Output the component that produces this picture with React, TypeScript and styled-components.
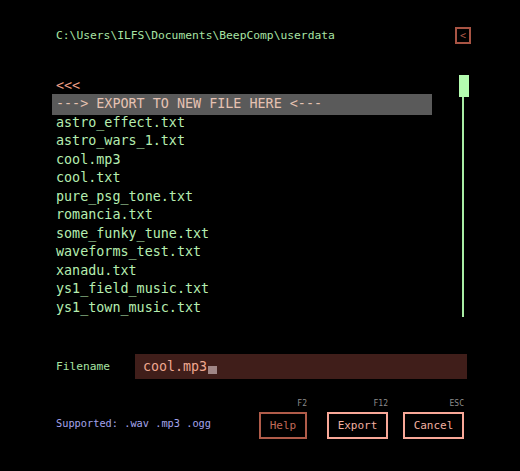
import React from 'react'
import styled, { createGlobalStyle } from 'styled-components'

const GlobalStyle = createGlobalStyle`
  html, body {
    margin: 0;
    padding: 0;
    background: #000;
  }
  body {
    font-family: 'DejaVu Sans Mono', 'Liberation Mono', monospace;
  }
`

const Screen = styled.div`
  width: 520px;
  height: 471px;
  box-sizing: border-box;
  padding: 27px 49px 0 52px;
  background: #000;
  display: flex;
  flex-direction: column;
`

const Header = styled.div`
  display: flex;
  align-items: center;
  justify-content: space-between;
  height: 17px;
`

const Path = styled.div`
  padding-left: 4px;
  margin-top: 1px;
  font-size: 11.3px;
  line-height: 14px;
  color: #a8e4a4;
  white-space: pre;
`

const BackButton = styled.div`
  width: 16px;
  height: 17px;
  box-sizing: border-box;
  border: 2px solid #a85444;
  color: #b05a48;
  font-size: 10px;
  line-height: 13px;
  text-align: center;
`

const Browser = styled.div`
  display: flex;
  gap: 27px;
  margin-top: 31px;
`

const List = styled.div`
  width: 380px;
  padding-top: 1.5px;
  display: flex;
  flex-direction: column;
`

const Row = styled.div<{ $kind?: 'up' | 'export' | 'file' }>`
  height: ${p => (p.$kind === 'export' ? '20.5px' : '18.5px')};
  margin: ${p => (p.$kind === 'export' ? '-1px 0' : '0')};
  padding-left: 4px;
  font-size: 13.4px;
  line-height: ${p => (p.$kind === 'export' ? '20.5px' : '18.5px')};
  white-space: pre;
  background: ${p => (p.$kind === 'export' ? '#5a5a5a' : 'transparent')};
  color: ${p =>
    p.$kind === 'up' ? '#f0a088' : p.$kind === 'export' ? '#e6c2b2' : '#b6eeb0'};
`

const Scrollbar = styled.div`
  width: 10px;
  display: flex;
  flex-direction: column;
`

const Thumb = styled.div`
  height: 22px;
  background: #b4fcb0;
`

const Track = styled.div`
  flex: 1;
  width: 2px;
  margin-left: 3px;
  background: #a8eca4;
`

const FilenameRow = styled.div`
  display: flex;
  align-items: center;
  margin-top: 37px;
  padding-left: 4px;
`

const Label = styled.div`
  width: 79px;
  font-size: 11.2px;
  color: #a8e4a4;
`

const Input = styled.div`
  width: 332px;
  height: 25px;
  box-sizing: border-box;
  padding-left: 8px;
  background: #401e1a;
  font-size: 13.3px;
  line-height: 25px;
  color: #f0a890;
`

const Cursor = styled.span`
  display: inline-block;
  width: 9px;
  height: 8px;
  margin-left: 1px;
  vertical-align: -3px;
  background: #a08686;
`

const Footer = styled.div`
  display: flex;
  align-items: flex-end;
  margin-top: 20px;
  padding: 0 7px 0 4px;
`

const Supported = styled.div`
  flex: 1;
  margin-bottom: 9px;
  font-size: 10.3px;
  line-height: 14px;
  color: #a4a4ec;
`

const Action = styled.div<{ $offset: number; $width: number }>`
  display: flex;
  flex-direction: column;
  align-items: flex-end;
  width: ${p => p.$width}px;
  margin-left: ${p => p.$offset}px;
`

const Key = styled.div`
  height: 10px;
  margin-bottom: 3px;
  font-size: 8px;
  line-height: 10px;
  color: #8c8c8c;
`

const Button = styled.div<{ $dim?: boolean }>`
  width: 100%;
  height: 27px;
  box-sizing: border-box;
  border: 2px solid ${p => (p.$dim ? '#b05c4a' : '#f8a898')};
  color: ${p => (p.$dim ? '#c06a58' : '#f2b0a0')};
  font-size: 11px;
  line-height: 24px;
  text-align: center;
`

const files = [
  'astro_effect.txt',
  'astro_wars_1.txt',
  'cool.mp3',
  'cool.txt',
  'pure_psg_tone.txt',
  'romancia.txt',
  'some_funky_tune.txt',
  'waveforms_test.txt',
  'xanadu.txt',
  'ys1_field_music.txt',
  'ys1_town_music.txt',
]

export default function App() {
  return (
    <>
      <GlobalStyle />
      <Screen>
        <Header>
          <Path>C:\Users\ILFS\Documents\BeepComp\userdata</Path>
          <BackButton>&lt;</BackButton>
        </Header>

        <Browser>
          <List>
            <Row $kind="up">&lt;&lt;&lt;</Row>
            <Row $kind="export">---&gt; EXPORT TO NEW FILE HERE &lt;---</Row>
            {files.map(f => (
              <Row key={f} $kind="file">
                {f}
              </Row>
            ))}
          </List>
          <Scrollbar>
            <Thumb />
            <Track />
          </Scrollbar>
        </Browser>

        <FilenameRow>
          <Label>Filename</Label>
          <Input>
            cool.mp3
            <Cursor />
          </Input>
        </FilenameRow>

        <Footer>
          <Supported>Supported: .wav .mp3 .ogg</Supported>
          <Action $offset={0} $width={48}>
            <Key>F2</Key>
            <Button $dim>Help</Button>
          </Action>
          <Action $offset={20} $width={61}>
            <Key>F12</Key>
            <Button>Export</Button>
          </Action>
          <Action $offset={15} $width={61}>
            <Key>ESC</Key>
            <Button>Cancel</Button>
          </Action>
        </Footer>
      </Screen>
    </>
  )
}
